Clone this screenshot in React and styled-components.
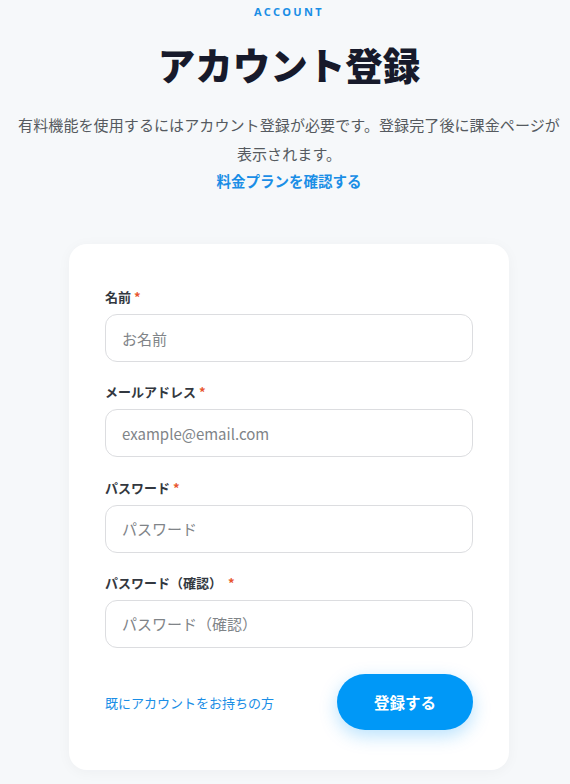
import React from "react";
import styled, { createGlobalStyle } from "styled-components";

const Global = createGlobalStyle`
  html, body { margin: 0; padding: 0; background: #f6f8fa; }
  body { font-family: "Noto Sans CJK JP", "Noto Sans", sans-serif; }
  * { box-sizing: border-box; }
`;

const Page = styled.main`
  display: flex;
  flex-direction: column;
  align-items: center;
  padding: 3px 15px 40px 23px;
`;

const Eyebrow = styled.div`
  font-family: "Noto Sans", "Noto Sans CJK JP", sans-serif;
  font-size: 11px;
  font-weight: 700;
  letter-spacing: 2.4px;
  color: #1a8ee6;
  line-height: 18px;
`;

const Title = styled.h1`
  margin: 17px 0 0;
  font-size: 37.5px;
  font-weight: 900;
  color: #171a2b;
  line-height: 52px;
`;

const Lead = styled.p`
  margin: 20px 0 0;
  font-size: 15px;
  letter-spacing: 0.1px;
  color: #555a60;
  line-height: 29px;
  text-align: center;
  white-space: nowrap;
`;

const PlanLink = styled.a`
  margin-top: 1px;
  font-size: 14.5px;
  font-weight: 700;
  color: #1a8ee6;
  text-decoration: none;
  line-height: 24px;
`;

const Card = styled.form`
  margin-top: 51px;
  width: 440px;
  background: #ffffff;
  border-radius: 18px;
  padding: 45px 36px 40px;
  display: flex;
  flex-direction: column;
  gap: 22.3px;
  box-shadow: 0 2px 14px rgba(20, 30, 50, 0.04);
`;

const Field = styled.div`
  display: flex;
  flex-direction: column;
  gap: 9px;
`;

const Label = styled.label`
  font-size: 13px;
  font-weight: 700;
  color: #333840;
  line-height: 16px;
`;

const Req = styled.span`
  color: #e8562e;
  margin-left: ${(p) => p.$gap || 3}px;
`;

const Input = styled.input`
  height: 48px;
  width: 100%;
  border: 1px solid #dcdde0;
  border-radius: 12px;
  padding: 0 16px;
  font-family: "Noto Sans CJK JP", "Noto Sans", sans-serif;
  font-size: 15px;
  color: #333;
  background: #fff;
  outline: none;
  &::placeholder { color: #808488; }
`;

const Actions = styled.div`
  margin-top: 4px;
  display: flex;
  align-items: center;
  justify-content: space-between;
`;

const LoginLink = styled.a`
  font-size: 13px;
  color: #1a8ee6;
  text-decoration: none;
`;

const Submit = styled.button`
  width: 136px;
  height: 56px;
  border: none;
  border-radius: 28px;
  background: #0098f7;
  color: #fff;
  font-family: "Noto Sans CJK JP", "Noto Sans", sans-serif;
  font-size: 15.5px;
  font-weight: 700;
  box-shadow: 0 6px 18px rgba(0, 152, 247, 0.28);
  cursor: pointer;
`;

const fields = [
  { label: "名前", placeholder: "お名前" },
  { label: "メールアドレス", placeholder: "example@email.com" },
  { label: "パスワード", placeholder: "パスワード" },
  { label: "パスワード（確認）", placeholder: "パスワード（確認）", gap: 6 },
];

export default function App() {
  return (
    <>
      <Global />
      <Page>
        <Eyebrow>ACCOUNT</Eyebrow>
        <Title>アカウント登録</Title>
        <Lead>
          有料機能を使用するにはアカウント登録が必要です。登録完了後に課金ページが
          <br />
          表示されます。
        </Lead>
        <PlanLink href="#">料金プランを確認する</PlanLink>
        <Card onSubmit={(e) => e.preventDefault()}>
          {fields.map((f) => (
            <Field key={f.label}>
              <Label>
                {f.label}
                <Req $gap={f.gap}>*</Req>
              </Label>
              <Input type="text" placeholder={f.placeholder} />
            </Field>
          ))}
          <Actions>
            <LoginLink href="#">既にアカウントをお持ちの方</LoginLink>
            <Submit type="submit">登録する</Submit>
          </Actions>
        </Card>
      </Page>
    </>
  );
}
